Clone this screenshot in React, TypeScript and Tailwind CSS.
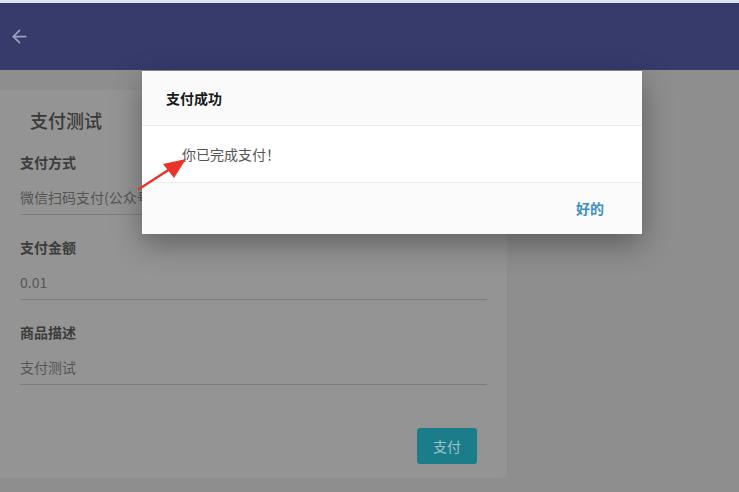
import { ArrowLeft } from "lucide-react";

const FONT = "font-['Noto_Sans_CJK_SC','Noto_Sans',sans-serif]";

type FieldProps = {
  label: string;
  value: string;
};

function Field({ label, value }: FieldProps) {
  return (
    <div className="mx-5 border-b border-[#7d7d7d]">
      <div className="h-[36px] flex items-center text-[14px] font-semibold text-[#3c3c3c]">{label}</div>
      <div className="h-[34px] flex items-center text-[14px] text-[#555555] whitespace-nowrap overflow-hidden">
        {value}
      </div>
    </div>
  );
}

export default function App() {
  return (
    <div className={`relative w-[739px] h-[492px] overflow-hidden bg-[#8e8e8e] ${FONT}`}>
      <div className="h-[3px] bg-[#dde3ef]" />
      <header className="h-[67px] bg-[#363b6c] flex items-center px-[9px]">
        <ArrowLeft className="w-[21px] h-[21px] text-[#9ea2c2]" strokeWidth={2} />
      </header>

      {/* background form card */}
      <div className="mt-[20px] w-[507px] h-[388px] rounded-r-[5px] bg-[#949494] pt-[14px]">
        <h1 className="ml-[30px] h-[32px] flex items-center text-[18px] font-medium text-[#393939]">支付测试</h1>
        <div className="mt-[8px] flex flex-col gap-[14px]">
          <Field label="支付方式" value="微信扫码支付(公众号支付)" />
          <Field label="支付金额" value="0.01" />
          <Field label="商品描述" value="支付测试" />
        </div>
        <div className="mt-[43px] mr-[30px] flex justify-end">
          <button className="w-[60px] h-[36px] rounded-[3px] bg-[#1b7d89] text-[14px] text-[#9cc2c7]">支付</button>
        </div>
      </div>

      {/* dialog */}
      <div className="absolute left-[142px] top-[71px] w-[500px] rounded-b-[3px] bg-white shadow-[0_10px_30px_rgba(0,0,0,0.35)]">
        <div className="h-[55px] flex items-center px-[24px] bg-[#fafafa] border-b border-[#ececec] text-[14px] font-bold text-[#1a1a1a]">
          支付成功
        </div>
        <div className="h-[57px] flex items-center pl-[40px] border-b border-[#ececec] text-[14px] text-[#555555]">
          你已完成支付！
        </div>
        <div className="h-[51px] flex items-center justify-end pr-[38px] bg-[#fbfbfb]">
          <span className="text-[14px] font-bold text-[#3a8fc2]">好的</span>
        </div>
      </div>

      {/* annotation arrow */}
      <svg className="absolute left-[136px] top-[153px]" width="56" height="42" viewBox="0 0 56 42">
        <line x1="3" y1="36" x2="34" y2="16" stroke="#e8342b" strokeWidth="2.4" strokeLinecap="round" />
        <polygon points="50,6 27,11 38,25" fill="#e8342b" />
      </svg>
    </div>
  );
}
